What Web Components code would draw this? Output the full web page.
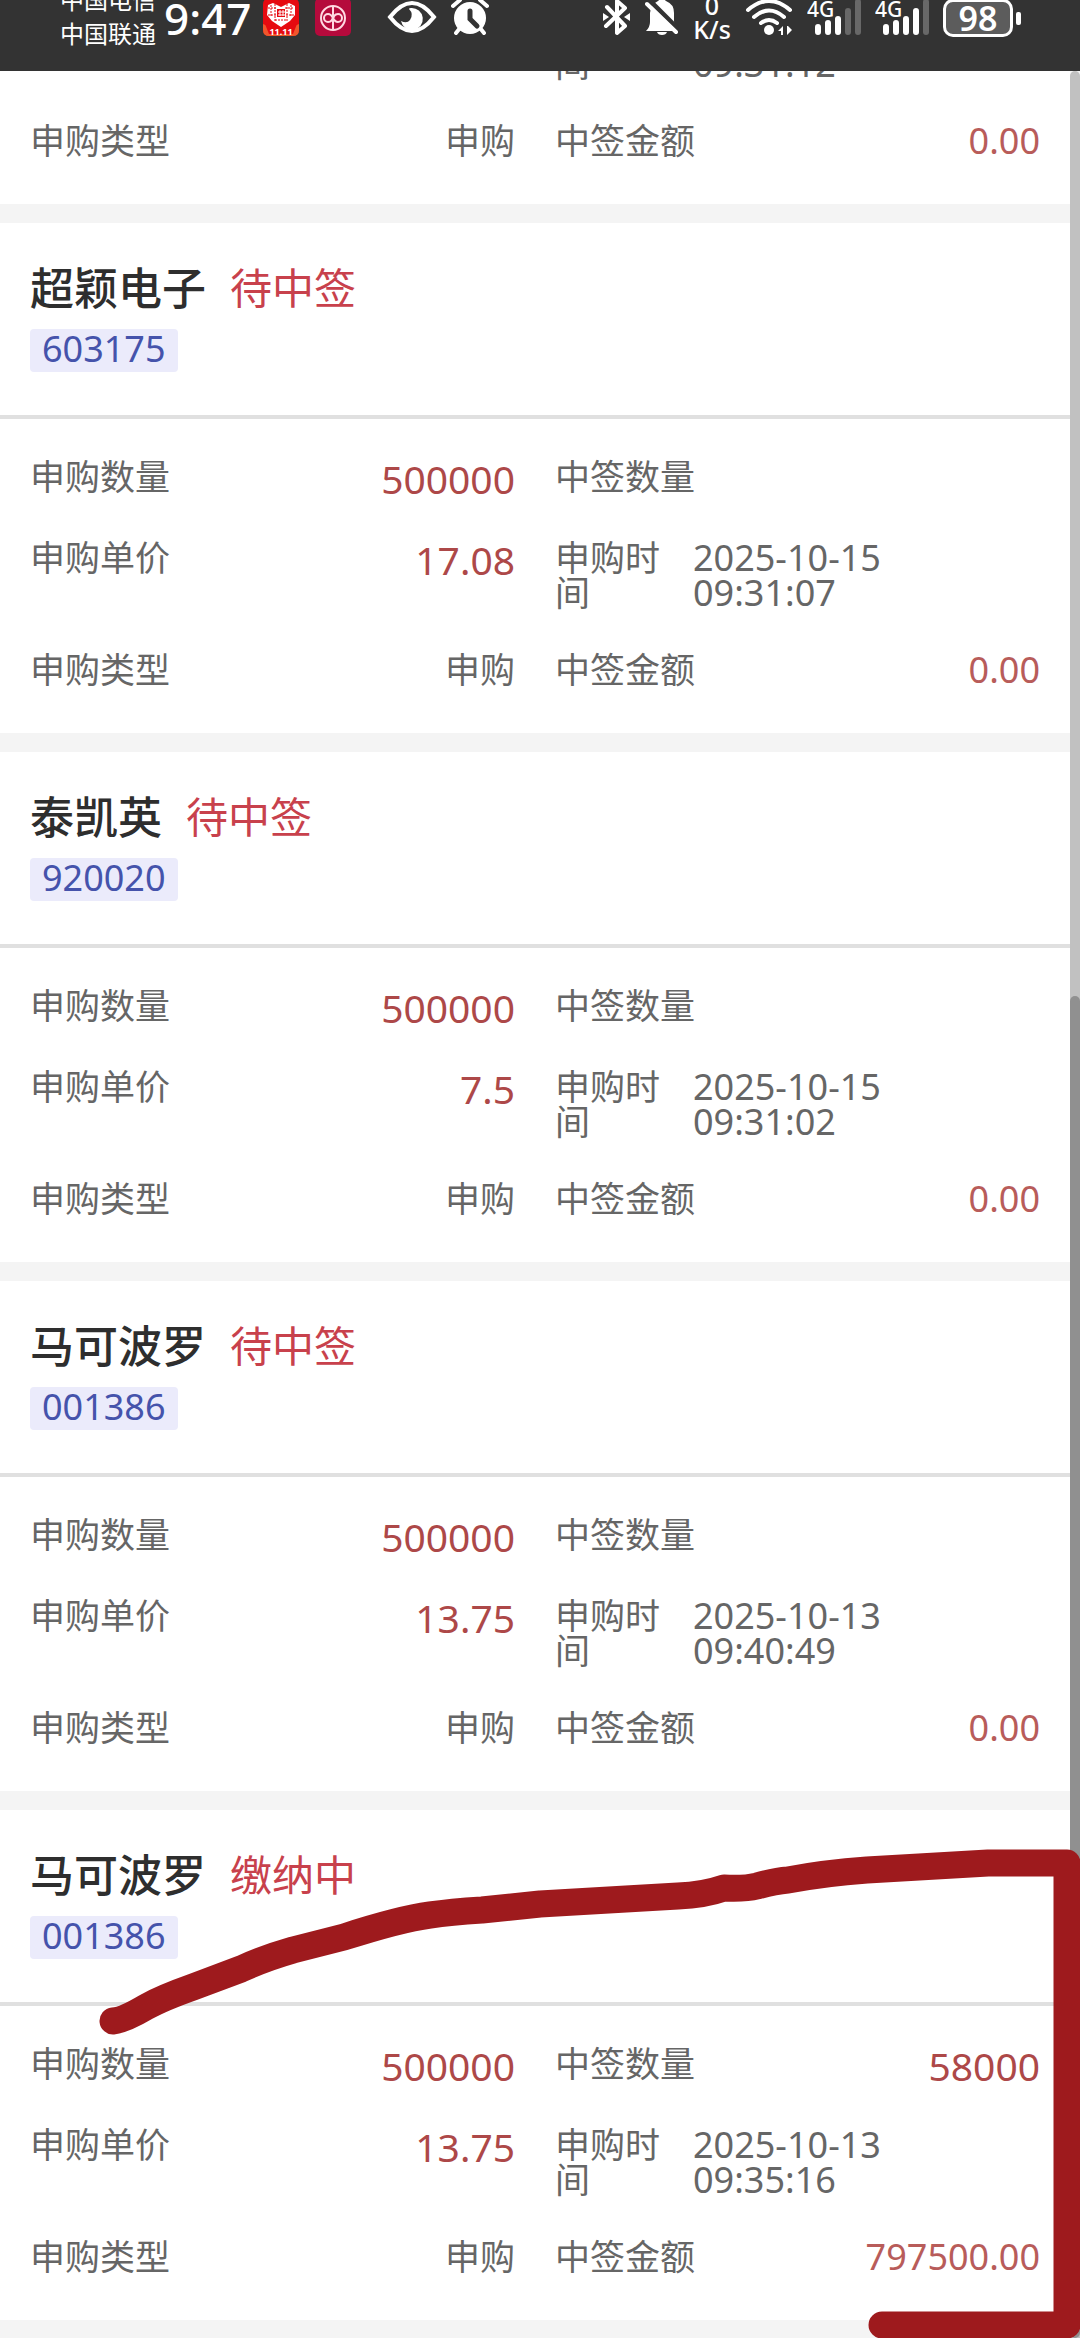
<!DOCTYPE html>
<html lang="zh-CN">
<head>
<meta charset="utf-8">
<meta name="viewport" content="width=device-width, initial-scale=1">
<title>申购记录</title>
<style>
  body {
    margin: 0;
    font-family: 'Noto Sans', 'Noto Sans CJK SC', sans-serif;
    color: #666;
  }
</style>
</head>
<body>
<record-app>
  <status-bar slot="status"></status-bar>
  <record-rest time="09:31:12" type="申购" amount="0.00"></record-rest>
  <record-card name="超颖电子" status="待中签" code="603175" quantity="500000" price="17.08"
    date="2025-10-15" time="09:31:07" type="申购" amount="0.00"></record-card>
  <record-card name="泰凯英" status="待中签" code="920020" quantity="500000" price="7.5"
    date="2025-10-15" time="09:31:02" type="申购" amount="0.00"></record-card>
  <record-card name="马可波罗" status="待中签" code="001386" quantity="500000" price="13.75"
    date="2025-10-13" time="09:40:49" type="申购" amount="0.00"></record-card>
  <record-card name="马可波罗" status="缴纳中" code="001386" quantity="500000" price="13.75" won="58000"
    date="2025-10-13" time="09:35:16" type="申购" amount="797500.00"></record-card>
  <pen-mark slot="overlay"></pen-mark>
</record-app>

<script>
  (function recordPage(customElements) {
    'use strict';

    class RecordApp extends HTMLElement {

      constructor() {
        super();
        const shadowRoot = this.attachShadow({mode: 'open'});
        shadowRoot.innerHTML = `
          <style>
            :host {
              display: flex;
              flex-direction: column;
              height: 100vh;
              position: relative;
              overflow: hidden;
            }
            main {
              flex: 1;
              min-height: 0;
              display: flex;
              overflow: hidden;
              background: #f4f4f4;
            }
            section {
              flex: 1;
              min-width: 0;
            }
            .track {
              width: 10px;
              display: grid;
              grid-template-rows: 20fr 29fr;
              background: #c1c1c1;
              border-radius: 5px 5px 0 0;
            }
            .thumb {
              grid-row: 2;
              background: #909090;
              border-radius: 5px;
            }
          </style>
          <slot name="status"></slot>
          <main>
            <section><slot></slot></section>
            <div class="track"><div class="thumb"></div></div>
          </main>
          <slot name="overlay"></slot>
        `;
      }
    }
    customElements.define('record-app', RecordApp);

    class StatusBar extends HTMLElement {

      constructor() {
        super();
        const shadowRoot = this.attachShadow({mode: 'open'});
        shadowRoot.innerHTML = `
          <style>
            :host {
              display: flex;
              justify-content: space-between;
              height: 71px;
              flex: none;
              padding: 0 59px 0 60px;
              box-sizing: border-box;
              overflow: hidden;
              background: #333;
              color: #fff;
            }
            div {
              display: flex;
              align-items: flex-start;
            }
            .right { gap: 14px; }
            .apps { gap: 16px; margin-left: 12px; }
            .alerts { gap: 14px; margin-left: 36px; }
            .carrier {
              font-size: 24px;
              line-height: 34px;
              margin-top: -17px;
            }
            .clock {
              font-size: 44px;
              font-weight: 500;
              line-height: 36px;
              margin-left: 8px;
            }
            .speed {
              width: 38px;
              font-size: 25px;
              font-weight: 500;
              line-height: 24px;
              margin-top: -7px;
              text-align: center;
            }
            .battery { align-items: center; gap: 3px; }
            .level {
              width: 70px;
              height: 38px;
              margin-top: -1px;
              box-sizing: border-box;
              border: 3px solid #fff;
              border-radius: 10px;
              background: #5c5c5c;
              font-size: 34px;
              font-weight: 600;
              line-height: 32px;
              text-align: center;
            }
            .nub {
              width: 5px;
              height: 13px;
              border-radius: 2px;
              background: #fff;
            }
            svg { display: block; }
          </style>
          <div>
            <span class="carrier">中国电信<br>中国联通</span>
            <span class="clock">9:47</span>
            <div class="apps">
              <svg width="36" height="36" viewBox="0 0 36 36">
                <rect y="-2" width="36" height="38" rx="6" fill="#e60a10"/>
                <path d="M0 24q8 4 18 4t18-4v6q0 6-6 6H6q-6 0-6-6z" fill="#f0562c"/>
                <path d="M2 24q8 3 16 3t16-3l-4 10H6z" fill="#e60a10"/>
                <path d="M5 5l5-2 8 4 8-4 6 3v9l-5 6-9 6-9-6-5-6z" fill="#fff"/>
                <path d="M8 5v12M12 4v18M24 4v18M28 5v12M5 8h9M22 8h9M5 15h8M23 15h8M12 20h12" stroke="#e60a10" stroke-width="1" stroke-dasharray="2 1"/>
                <rect x="14" y="9" width="8" height="8" fill="#e60a10"/>
                <path d="M17 10v6M20 10v6M15 12h7M15 15h7" stroke="#fff" stroke-width="1"/>
                <text x="18" y="35" font-size="9" font-weight="700" fill="#fff" text-anchor="middle">11.11</text>
              </svg>
              <svg width="36" height="36" viewBox="0 0 36 36" fill="none" stroke="#ffd9e2" stroke-width="2">
                <rect y="-2" width="36" height="38" rx="5" fill="#b50a3c" stroke="none"/>
                <circle cx="18" cy="18" r="12"/>
                <path d="M18 6v9q0 7-5 7a4 4 0 0 1 0-8q3 0 5 4t5 4a4 4 0 0 0 0-8q-5 0-5 7v9"/>
              </svg>
            </div>
            <div class="alerts">
              <svg width="50" height="36" viewBox="0 0 50 36">
                <path d="M3 17Q14 3 25 3t22 14Q36 31 25 31T3 17z" fill="none" stroke="#fff" stroke-width="4"/>
                <path d="M24 8a11 11 0 1 1-10 13q6 3 9-1 4-6-1-11 0-1 2-1z" fill="#fff"/>
              </svg>
              <svg width="38" height="36" viewBox="0 0 38 36" fill="none" stroke="#fff" stroke-width="4" stroke-linecap="round">
                <circle cx="19" cy="18" r="16" fill="#fff" stroke="none"/>
                <path d="M2 6l7-6M36 6l-7-6M9 28l-4 5M29 28l4 5"/>
                <path d="M19 11v8l7 7" stroke="#333" stroke-width="5"/>
              </svg>
            </div>
          </div>
          <div class="right">
            <svg width="28" height="36" viewBox="0 0 28 36" fill="none" stroke="#fff" stroke-width="4">
              <path d="M4 7l18 19-8 7V1l8 7L3 26" stroke-linejoin="round" stroke-linecap="round"/>
              <path d="M0 13l6 4-6 4zM27 13l-6 4 6 4z" fill="#fff" stroke="none"/>
            </svg>
            <svg width="34" height="36" viewBox="0 0 34 36">
              <path d="M1 31q4-4 4-9v-9q1-9 8-12 4-4 8 0 8 3 8 12v8q0 5 3 10z" fill="#fff"/>
              <path d="M12 32h10q-1 3-5 3t-5-3z" fill="#fff"/>
              <path d="M4 0l29 29" stroke="#333" stroke-width="5"/>
              <path d="M2 4l29 28" stroke="#fff" stroke-width="4" stroke-linecap="round"/>
            </svg>
            <span class="speed">0<br>K/s</span>
            <svg width="48" height="36" viewBox="0 0 48 36" fill="none" stroke="#fff" stroke-width="4" stroke-linecap="round">
              <path d="M3 10q21-18 42 0M9 17q15-13 30 0M16 23q8-6 16 0"/>
              <circle cx="24" cy="30" r="5" fill="#fff" stroke="none"/>
              <path d="M33 31l5-5v9h-2v-4zM47 30l-5 5v-9h1z" fill="#fff" stroke="none"/>
            </svg>
            <svg width="54" height="36" viewBox="0 0 54 36" stroke="#fff" stroke-width="6" stroke-linecap="round">
              <path d="M11 27v5M21 23v9M31 19v13"/>
              <path d="M41 11v21M51 2v30" stroke="#686868"/>
              <text x="0" y="17" font-size="21" font-weight="500" fill="#fff" stroke="none">4G</text>
            </svg>
            <svg width="54" height="36" viewBox="0 0 54 36" stroke="#fff" stroke-width="6" stroke-linecap="round">
              <path d="M11 27v5M21 23v9M31 19v13M41 11v21"/>
              <path d="M51 2v30" stroke="#686868"/>
              <text x="0" y="17" font-size="21" font-weight="500" fill="#fff" stroke="none">4G</text>
            </svg>
            <div class="battery"><span class="level">98</span><span class="nub"></span></div>
          </div>
        `;
      }
    }
    customElements.define('status-bar', StatusBar);

    // One label with its value; size="large" is for the quantities and prices
    class RecordField extends HTMLElement {

      constructor() {
        super();
        const shadowRoot = this.attachShadow({mode: 'open'});
        shadowRoot.innerHTML = `
          <style>
            :host {
              display: flex;
              justify-content: space-between;
              align-items: flex-start;
              font-size: 35px;
              line-height: 35px;
            }
            :host([size="large"]) .value {
              font-size: 39px;
              line-height: 39px;
              color: #ad4848;
            }
            :host([tone="amount"]) .value {
              font-size: 36px;
              color: #b85c5a;
            }
            :host([tone="time"]) {
              justify-content: flex-start;
              gap: 30px;
            }
            :host([tone="time"]) .label { width: 108px; }
            :host([tone="time"]) .value { font-size: 36px; }
          </style>
          <span class="label"></span>
          <span class="value"><slot></slot></span>
        `;
        shadowRoot.querySelector('.label').textContent = this.getAttribute('label');
      }
    }
    customElements.define('record-field', RecordField);

    const gridStyle = `
      .grid {
        display: grid;
        grid-template-columns: 1fr 1fr;
        gap: 42px 40px;
        padding: 40px 30px 46px;
      }
    `;

    class RecordCard extends HTMLElement {

      constructor() {
        super();
        const get = (key) => this.getAttribute(key) || '';
        const shadowRoot = this.attachShadow({mode: 'open'});
        shadowRoot.innerHTML = `
          <style>
            :host {
              display: block;
              margin-bottom: 19px;
              background: #fff;
            }
            header {
              padding: 42px 30px 43px;
              border-bottom: 4px solid #e0e0e0;
            }
            .title {
              display: flex;
              align-items: center;
              gap: 24px;
              line-height: 46px;
            }
            h2 {
              margin: 0;
              font-size: 44px;
              font-weight: 500;
              color: #2e2e2e;
            }
            .status {
              font-size: 42px;
              color: #c8414c;
            }
            .code {
              display: block;
              width: fit-content;
              margin-top: 18px;
              padding: 0 12px 4px;
              border-radius: 4px;
              background: #ebebfb;
              font-size: 36px;
              line-height: 39px;
              color: #4553ab;
            }
            ${gridStyle}
          </style>
          <header>
            <div class="title">
              <h2>${get('name')}</h2>
              <span class="status">${get('status')}</span>
            </div>
            <span class="code">${get('code')}</span>
          </header>
          <div class="grid">
            <record-field label="申购数量" size="large">${get('quantity')}</record-field>
            <record-field label="中签数量" size="large">${get('won')}</record-field>
            <record-field label="申购单价" size="large">${get('price')}</record-field>
            <record-field label="申购时间" tone="time">${get('date')}<br>${get('time')}</record-field>
            <record-field label="申购类型">${get('type')}</record-field>
            <record-field label="中签金额" tone="amount">${get('amount')}</record-field>
          </div>
        `;
      }
    }
    customElements.define('record-card', RecordCard);

    // Tail of the record that is scrolled under the status bar
    class RecordRest extends HTMLElement {

      constructor() {
        super();
        const shadowRoot = this.attachShadow({mode: 'open'});
        shadowRoot.innerHTML = `
          <style>
            :host {
              display: block;
              margin: -25px 0 19px;
              background: #fff;
            }
            ${gridStyle}
            .grid { padding-top: 0; }
          </style>
          <div class="grid">
            <span></span>
            <record-field label="间" tone="time">${this.getAttribute('time')}</record-field>
            <record-field label="申购类型">${this.getAttribute('type')}</record-field>
            <record-field label="中签金额" tone="amount">${this.getAttribute('amount')}</record-field>
          </div>
        `;
      }
    }
    customElements.define('record-rest', RecordRest);

    class PenMark extends HTMLElement {

      constructor() {
        super();
        const shadowRoot = this.attachShadow({mode: 'open'});
        shadowRoot.innerHTML = `
          <style>
            :host {
              display: block;
              position: absolute;
              inset: 0;
              pointer-events: none;
            }
            svg {
              display: block;
              width: 100%;
              height: 100%;
            }
          </style>
          <svg viewBox="0 0 1080 2338" preserveAspectRatio="none" fill="none" stroke="#9e1a1d"
            stroke-width="27" stroke-linecap="round" stroke-linejoin="round">
            <path d="M113 2021Q124 2020 146 2007Q162 1998 193 1987L241 1969Q265 1958 293 1950L344 1937Q400 1919 430 1915
              Q450 1912 482 1910L540 1904L626 1899L678 1896Q704 1895 724 1888Q745 1889 757 1886Q775 1881 788 1880
              Q825 1873 867 1870L919 1867L988 1863H1067V2325H882"/>
          </svg>
        `;
      }
    }
    customElements.define('pen-mark', PenMark);
  })(window.customElements);
</script>
</body>
</html>
